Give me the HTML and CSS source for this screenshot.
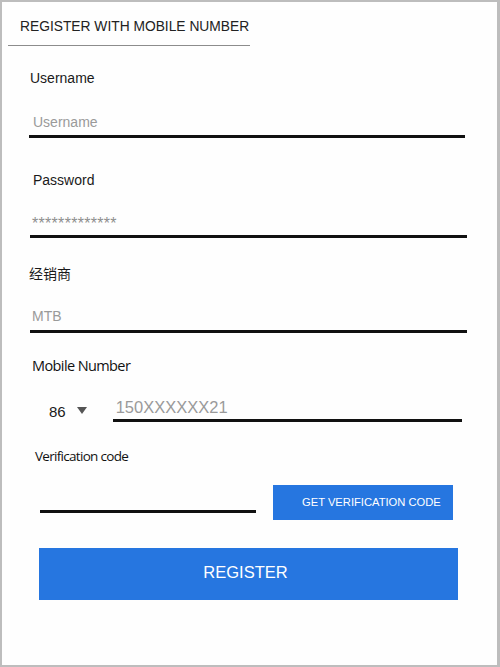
FILE: index.html
```html
<!DOCTYPE html>
<html lang="en">
<head>
<meta charset="utf-8">
<title>Register</title>
<link rel="stylesheet" href="styles.css">
</head>
<body>
<div class="frame">
  <div class="tab">REGISTER WITH MOBILE NUMBER</div>

  <div class="label l-user">Username</div>
  <div class="input i-user">Username</div>

  <div class="label l-pass">Password</div>
  <div class="input i-pass">*************</div>

  <div class="label l-dealer">经销商</div>
  <div class="input i-dealer">MTB</div>

  <div class="label-h l-mobile">Mobile Number</div>
  <div class="phone-row">
    <span class="code">86</span>
    <svg class="caret" width="10" height="7" viewBox="0 0 10 7"><polygon points="0,0 10,0 5,7" fill="#555"/></svg>
    <div class="phone-input">150XXXXXX21</div>
  </div>

  <div class="label-h l-verify">Verification code</div>
  <div class="verify-row">
    <div class="verify-input"></div>
    <div class="btn-code">GET VERIFICATION CODE</div>
  </div>

  <div class="btn-register">REGISTER</div>
</div>
</body>
</html>
```

FILE: styles.css
```css
html, body {
  margin: 0;
  padding: 0;
  background: #ffffff;
}
.frame {
  width: 500px;
  height: 667px;
  box-sizing: border-box;
  border: 2px solid #bdbdbd;
  border-right-width: 3px;
  background: #fefefe;
  font-family: "Liberation Sans", Arial, "Noto Sans CJK SC", sans-serif;
  color: #1c1c1c;
  overflow: hidden;
}
.tab {
  margin-left: 6px;
  width: 230px;
  padding: 17px 0 10px 12px;
  font-size: 13.8px;
  line-height: 16px;
  color: #222;
  border-bottom: 1px solid #8c8c8c;
  white-space: nowrap;
}
.label {
  font-size: 14px;
  line-height: 16px;
  color: #1a1a1a;
}
.label-h {
  font-family: "Open Sans", "Noto Sans", sans-serif;
  color: #111;
}
.input {
  border-bottom: 3px solid #111;
  font-size: 14px;
  line-height: 16px;
  color: #9a9a9a;
}
.l-user { margin: 24px 0 0 28px; }
.i-user {
  margin: 28px 0 0 27px;
  width: 432px;
  padding: 0 0 5px 4px;
}
.l-pass { margin: 34px 0 0 31px; }
.i-pass {
  margin: 28px 0 0 28px;
  width: 435px;
  padding: 0 0 3px 2px;
  font-size: 16px;
  letter-spacing: 0.3px;
  color: #8e8e8e;
}
.l-dealer {
  margin: 28px 0 0 27px;
  font-family: "Liberation Sans", "Noto Sans CJK SC", sans-serif;
}
.i-dealer {
  margin: 26px 0 0 28px;
  width: 435px;
  padding: 0 0 6px 2px;
}
.l-mobile {
  margin: 25px 0 0 30px;
  font-size: 14.5px;
  line-height: 16px;
  letter-spacing: -0.6px;
}
.phone-row {
  display: flex;
  align-items: flex-start;
  margin-top: 24px;
}
.code {
  margin: 5px 0 0 47px;
  font-size: 15px;
  line-height: 18px;
  color: #1a1a1a;
}
.caret {
  display: block;
  margin: 9px 0 0 11px;
}
.phone-input {
  margin-left: 26px;
  width: 346px;
  padding: 0 0 3px 3px;
  font-size: 16.5px;
  line-height: 18px;
  color: #9a9a9a;
  border-bottom: 3px solid #111;
}
.l-verify {
  margin: 26px 0 0 33px;
  font-size: 13.5px;
  line-height: 16px;
  letter-spacing: -0.7px;
}
.verify-row {
  display: flex;
  align-items: flex-start;
  margin-top: 21px;
}
.verify-input {
  margin-left: 38px;
  width: 216px;
  height: 25px;
  border-bottom: 3px solid #111;
}
.btn-code {
  margin-left: 17px;
  width: 151px;
  height: 35px;
  padding-left: 29px;
  background: #2676e0;
  color: #fff;
  font-size: 11.2px;
  line-height: 35px;
  white-space: nowrap;
}
.btn-register {
  margin: 28px 0 0 37px;
  width: 413px;
  height: 52px;
  padding-right: 6px;
  background: #2676e0;
  color: #fff;
  font-size: 16.5px;
  line-height: 48px;
  text-align: center;
}
```
